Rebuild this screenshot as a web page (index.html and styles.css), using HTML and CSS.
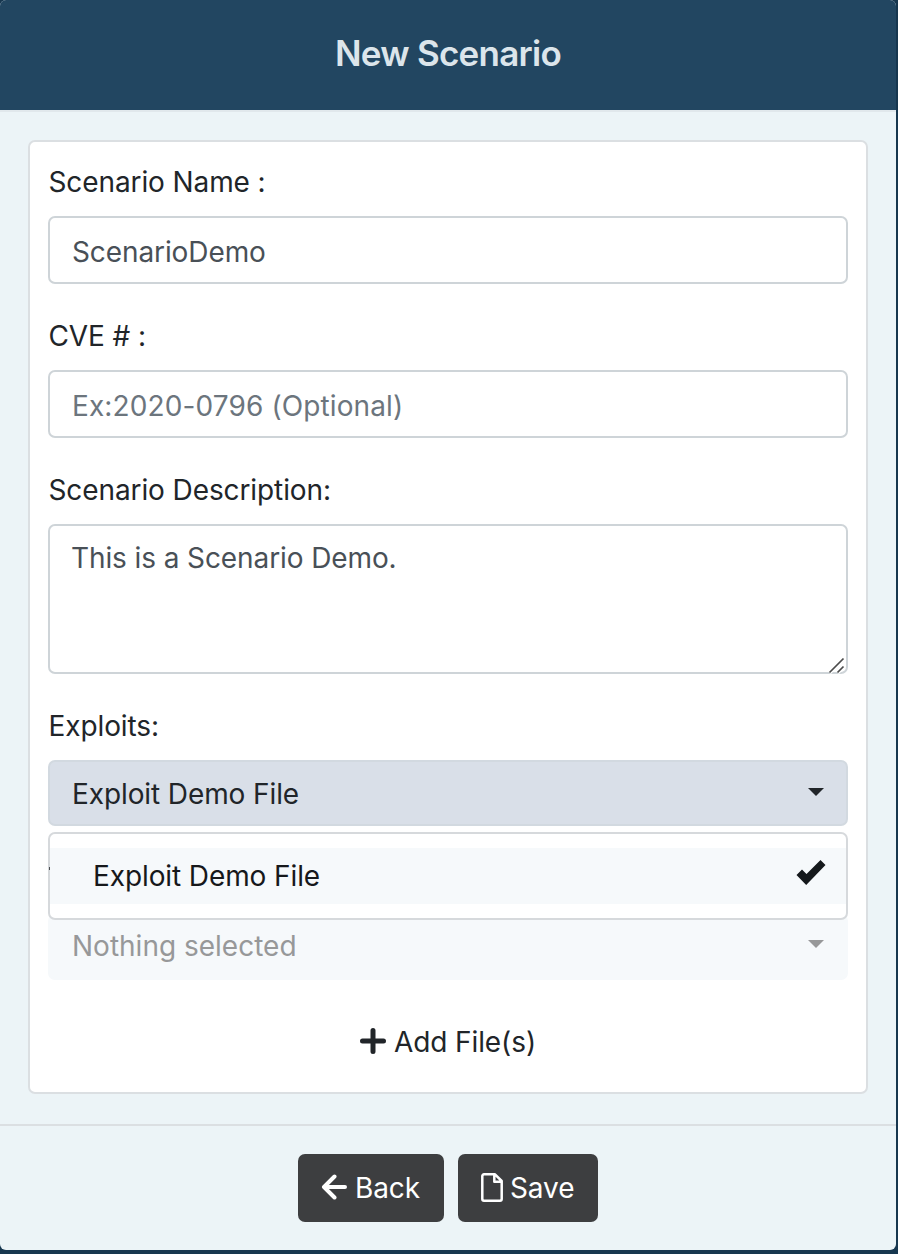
FILE: index.html
```html
<!DOCTYPE html>
<html lang="en">
<head>
<meta charset="utf-8">
<title>New Scenario</title>
<link rel="stylesheet" href="styles.css">
</head>
<body>
<main class="modal">
  <header class="modal-header"><h1 class="title">New Scenario</h1></header>
  <section class="modal-body">
    <form class="card">
      <div class="field">
        <label class="label" for="name">Scenario Name :</label>
        <input class="control" id="name" type="text" value="ScenarioDemo">
      </div>
      <div class="field">
        <label class="label" for="cve">CVE # :</label>
        <input class="control" id="cve" type="text" placeholder="Ex:2020-0796 (Optional)">
      </div>
      <div class="field">
        <label class="label" for="desc">Scenario Description:</label>
        <div class="area-wrap">
          <textarea class="control area" id="desc">This is a Scenario Demo.</textarea>
          <svg class="grip" width="18" height="18" viewBox="0 0 18 18"><path d="M1.500 16.500 15.500 2.500M9.500 16.500 15.500 10.500" stroke="#fff" stroke-width="4"/><path d="M1.500 16.500 15.500 2.500M9.500 16.500 15.500 10.500" stroke="#4c4c4c" stroke-width="1.700"/></svg>
        </div>
      </div>
      <div class="field">
        <span class="label">Exploits:</span>
        <div class="select">
          <span>Exploit Demo File</span>
          <i class="caret"></i>
          <div class="menu">
            <div class="option">
              <span>Exploit Demo File</span>
              <svg class="check" width="30" height="27" viewBox="0 0 30 27"><path d="M.5 16 6 10.500 10.500 15 24.500 1 29.500 6 10.200 26Z" fill="#15191c"/></svg>
            </div>
          </div>
        </div>
      </div>
      <div class="select disabled">
        <span class="placeholder">Nothing selected</span>
        <i class="caret"></i>
      </div>
      <div class="add">
        <svg width="26" height="26" viewBox="0 0 26 26"><path d="M13 2.500V23.500M2.500 13H23.500" stroke="#212529" stroke-width="5" stroke-linecap="round"/></svg>
        <span>Add File(s)</span>
      </div>
    </form>
  </section>
  <footer class="modal-footer">
    <button class="btn back" type="button">
      <svg width="26" height="26" viewBox="0 0 26 26"><path d="M13.500 2.500 3 13 13.500 23.500M3.500 13H24" fill="none" stroke="#fff" stroke-width="4" stroke-linecap="round" stroke-linejoin="round"/></svg>
      <span>Back</span>
    </button>
    <button class="btn save" type="button">
      <svg width="22" height="29" viewBox="0 0 22 29"><path d="M3 1.300H14L20.700 8V26a1.700 1.700 0 0 1-1.700 1.700H3A1.700 1.700 0 0 1 1.300 26V3A1.700 1.700 0 0 1 3 1.300ZM13.300 1.500V8.700H20.500" fill="none" stroke="#fff" stroke-width="2.500" stroke-linejoin="round"/></svg>
      <span>Save</span>
    </button>
  </footer>
</main>
</body>
</html>
```
FILE: styles.css
```css
* { box-sizing: border-box; }
body {
  margin: 0;
  height: 1254px;
  overflow: hidden;
  background: #17374f;
  font: 28px/45px Inter, "Liberation Sans", sans-serif;
  letter-spacing: -0.1px;
  color: #212529;
}
.modal {
  width: 896px;
  height: 1250px;
  display: flex;
  flex-direction: column;
  background: #ecf4f7;
  border-radius: 6px;
  overflow: hidden;
}
.modal-header {
  height: 112px;
  padding-top: 30px;
  background: #224661;
  background-clip: padding-box;
  border-bottom: 2px solid #e1e8ec;
  text-align: center;
}
.title {
  margin: 0;
  font-size: 35px;
  line-height: 46px;
  font-weight: 600;
  color: #dce5eb;
  letter-spacing: -0.75px;
}
.modal-body { height: 1012px; padding: 28px; }
.card {
  height: 954px;
  padding: 18px;
  background: #fff;
  border: 2px solid #dbdfe2;
  border-radius: 7px;
}
.field { margin-bottom: 30px; }
.label { display: block; height: 56px; padding-left: 0.5px; white-space: nowrap; }
.control {
  display: block;
  width: 100%;
  height: 68px;
  margin: 0;
  padding: 4px 22px 0;
  border: 2px solid #ced4d8;
  border-radius: 7px;
  outline: none;
  background: #fff;
  color: #495057;
  font-family: inherit;
  font-size: 28px;
  letter-spacing: -0.1px;
}
.control::placeholder { color: #6c757d; opacity: 1; letter-spacing: 0.12px; }
.area-wrap { position: relative; }
.area { height: 150px; padding: 10px 21px 0; line-height: 45px; resize: none; }
.grip { position: absolute; right: 2px; bottom: 0; }
.select {
  position: relative;
  display: flex;
  align-items: center;
  justify-content: space-between;
  height: 66px;
  padding: 2px 22px 0;
  border: 2px solid #d2d9e0;
  border-radius: 7px;
  background: #d9dfe8;
  white-space: nowrap;
}
.caret {
  width: 0;
  height: 0;
  margin: -5px 0 0;
  border: 8px solid transparent;
  border-top-color: #212529;
  border-bottom: 0;
}
.menu {
  position: absolute;
  z-index: 2;
  left: -2px;
  top: 70px;
  width: 800px;
  height: 88px;
  padding: 14px 0;
  border: 2px solid #d6d9dc;
  border-radius: 7px;
  background: #fff;
}
.menu::before {
  content: "";
  position: absolute;
  left: -1px;
  top: 33px;
  width: 1px;
  height: 3px;
  background: #4b4e51;
}
.option {
  display: flex;
  justify-content: space-between;
  height: 56px;
  padding: 6px 20px 0 43px;
  background: #f6f9fb;
  color: #16181b;
}
.check { margin-top: 5px; }
.select.disabled {
  height: 66px;
  margin-top: 88px;
  padding-top: 0;
  padding-bottom: 2px;
  background: #f6f9fb;
  border-color: #f6f9fb;
  color: #979899;
}
.placeholder { letter-spacing: 0; }
.disabled .caret { border-top-color: #979899; }
.add {
  display: flex;
  align-items: center;
  justify-content: center;
  gap: 8px;
  height: 45px;
  margin-top: 40px;
  white-space: nowrap;
}
.add svg { margin-bottom: 3px; }
.modal-footer {
  height: 126px;
  padding-top: 28px;
  border-top: 2px solid #dbdfe2;
  display: flex;
  justify-content: center;
  gap: 14px;
}
.btn {
  display: flex;
  align-items: center;
  height: 68px;
  padding: 0 0 0 23px;
  gap: 8px;
  border: 0;
  border-radius: 7px;
  background: #3d3e40;
  color: #fff;
  font: inherit;
  letter-spacing: -0.1px;
  white-space: nowrap;
}
.btn svg { flex: none; margin-bottom: 2px; }
.back { width: 146px; }
.save { width: 140px; gap: 7px; }
```
